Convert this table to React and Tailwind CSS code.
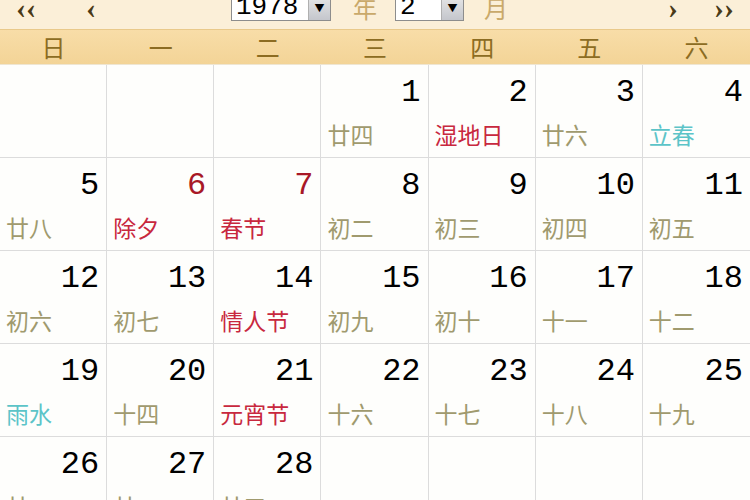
import React from "react";

const WEEK = ["日", "一", "二", "三", "四", "五", "六"];

// lunar text colours
const C_NORMAL = "text-[#a09a6e]";
const C_RED = "text-[#c8283e]";
const C_TEAL = "text-[#5cc4c8]";

const DAYS = [
  null,
  null,
  null,
  { d: 1, l: "廿四" },
  { d: 2, l: "湿地日", lc: C_RED },
  { d: 3, l: "廿六" },
  { d: 4, l: "立春", lc: C_TEAL },
  { d: 5, l: "廿八" },
  { d: 6, l: "除夕", lc: C_RED, red: true },
  { d: 7, l: "春节", lc: C_RED, red: true },
  { d: 8, l: "初二" },
  { d: 9, l: "初三" },
  { d: 10, l: "初四" },
  { d: 11, l: "初五" },
  { d: 12, l: "初六" },
  { d: 13, l: "初七" },
  { d: 14, l: "情人节", lc: C_RED },
  { d: 15, l: "初九" },
  { d: 16, l: "初十" },
  { d: 17, l: "十一" },
  { d: 18, l: "十二" },
  { d: 19, l: "雨水", lc: C_TEAL },
  { d: 20, l: "十四" },
  { d: 21, l: "元宵节", lc: C_RED },
  { d: 22, l: "十六" },
  { d: 23, l: "十七" },
  { d: 24, l: "十八" },
  { d: 25, l: "十九" },
  { d: 26, l: "廿一" },
  { d: 27, l: "廿二" },
  { d: 28, l: "廿三" },
  null,
  null,
  null,
  null,
];

const CJK = "font-['Noto_Sans_CJK_SC',sans-serif]";
const NUM = "font-['Liberation_Mono',monospace]";

function Select({ value, width }) {
  return (
    <div className="flex h-[27px] border border-[#8d8d8d] bg-white" style={{ width }}>
      <div className={`flex-1 px-1 ${NUM} text-[26px] leading-[24px] text-black`}>{value}</div>
      <div className="flex w-[22px] items-center justify-center border-l border-[#b0b0b0] bg-gradient-to-b from-[#e8e8e8] to-[#c4c6cc]">
        <span className="text-[10px] leading-none text-black">▼</span>
      </div>
    </div>
  );
}

export default function App() {
  return (
    <div className={`h-[500px] w-[750px] overflow-hidden bg-white ${CJK}`}>
      <div className="h-[29px] overflow-hidden bg-[#fbefd8]">
        <div className="mt-[-6px] flex items-center text-[#4a3a18]">
          <span className="ml-[16px] w-[70px] font-['Liberation_Serif',serif] text-[30px] font-bold leading-[20px]">‹‹</span>
          <span className="font-['Liberation_Serif',serif] text-[30px] font-bold leading-[20px]">‹</span>
          <div className="ml-[135px]">
            <Select value="1978" width={100} />
          </div>
          <span className="ml-[22px] text-[24px] leading-[27px] text-[#c9a96a]">年</span>
          <div className="ml-[18px]">
            <Select value="2" width={69} />
          </div>
          <span className="ml-[20px] text-[24px] leading-[27px] text-[#c9a96a]">月</span>
          <span className="ml-[160px] font-['Liberation_Serif',serif] text-[30px] font-bold leading-[20px]">›</span>
          <span className="ml-[36px] font-['Liberation_Serif',serif] text-[30px] font-bold leading-[20px]">››</span>
        </div>
      </div>
      <div className="grid h-[35px] grid-cols-7 border-t border-[#e9c98a] bg-gradient-to-b from-[#f8dda8] to-[#f3d497]">
        {WEEK.map((w) => (
          <div key={w} className="flex items-center justify-center text-[24px] leading-none text-[#8c6c22]">
            {w}
          </div>
        ))}
      </div>
      <div className="grid grid-cols-7 border-t border-[#efe6d2]">
        {DAYS.map((c, i) => (
          <div
            key={i}
            className={`h-[93px] border-b border-[#dcdcdc] bg-[#fefefc] ${i % 7 === 6 ? "" : "border-r"}`}
          >
            {c && (
              <div className="flex h-full flex-col">
                <div
                  className={`mt-[12px] pr-[7px] text-right ${NUM} text-[32px] leading-[32px] ${
                    c.red ? "text-[#a81826]" : "text-black"
                  }`}
                >
                  {c.d}
                </div>
                <div className={`mt-[12px] pl-[6px] text-[23px] leading-[26px] ${c.lc || C_NORMAL}`}>{c.l}</div>
              </div>
            )}
          </div>
        ))}
      </div>
    </div>
  );
}
